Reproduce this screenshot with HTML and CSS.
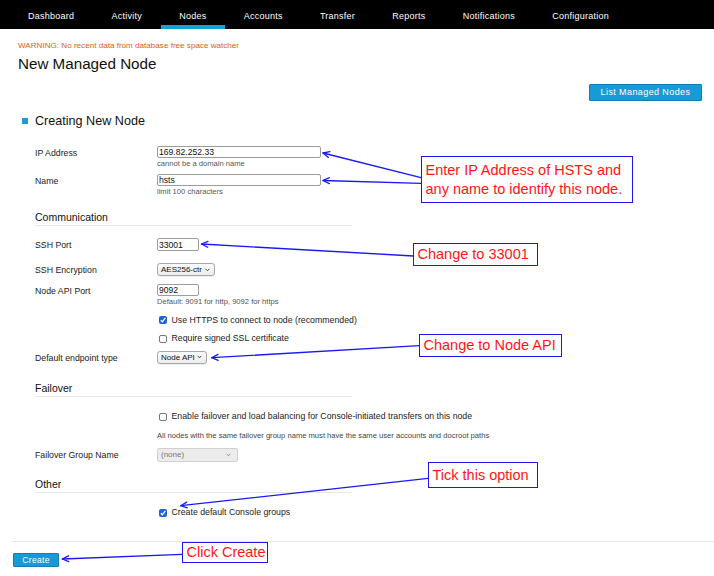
FILE: index.html
```
<!DOCTYPE html>
<html lang="en">
<head>
<meta charset="utf-8">
<title>New Managed Node</title>
<link rel="stylesheet" href="styles.css">
</head>
<body>
<nav class="topnav">
  <a class="tab">Dashboard</a>
  <a class="tab">Activity</a>
  <a class="tab active">Nodes</a>
  <a class="tab">Accounts</a>
  <a class="tab">Transfer</a>
  <a class="tab">Reports</a>
  <a class="tab">Notifications</a>
  <a class="tab">Configuration</a>
</nav>

<main class="page">
  <p class="warning">WARNING: No recent data from database free space watcher</p>
  <h1 class="title">New Managed Node</h1>
  <div class="actions"><button class="btn btn-list">List Managed Nodes</button></div>

  <h2 class="section-title"><span class="bullet"></span>Creating New Node</h2>

  <div class="form">
    <div class="row r-ip">
      <label class="lbl">IP Address</label>
      <div class="ctl">
        <input class="input w-wide" type="text" value="169.82.252.33">
        <div class="hint">cannot be a domain name</div>
      </div>
    </div>
    <div class="row r-name">
      <label class="lbl">Name</label>
      <div class="ctl">
        <input class="input w-wide" type="text" value="hsts">
        <div class="hint">limit 100 characters</div>
      </div>
    </div>

    <h3 class="group-title g-comm">Communication</h3>

    <div class="row r-ssh">
      <label class="lbl">SSH Port</label>
      <div class="ctl"><input class="input w-port tall" type="text" value="33001"></div>
    </div>
    <div class="row r-enc">
      <label class="lbl">SSH Encryption</label>
      <div class="ctl">
        <div class="select w-enc"><span>AES256-ctr</span><svg class="chev" width="5" height="4" viewBox="0 0 5 4"><path d="M0.6 0.8 L2.5 2.8 L4.4 0.8" fill="none" stroke="#333" stroke-width="0.9"/></svg></div>
      </div>
    </div>
    <div class="row r-api">
      <label class="lbl">Node API Port</label>
      <div class="ctl">
        <input class="input w-port" type="text" value="9092">
        <div class="hint">Default: 9091 for http, 9092 for https</div>
      </div>
    </div>
    <div class="row r-cb1">
      <span class="lbl"></span>
      <div class="ctl check">
        <span class="cb checked"><svg width="8" height="8" viewBox="0 0 8 8"><path d="M1.8 4.2 L3.4 5.8 L6.3 1.9" fill="none" stroke="#fff" stroke-width="1.3"/></svg></span>
        <span class="cb-text">Use HTTPS to connect to node (recommended)</span>
      </div>
    </div>
    <div class="row r-cb2">
      <span class="lbl"></span>
      <div class="ctl check">
        <span class="cb"></span>
        <span class="cb-text">Require signed SSL certificate</span>
      </div>
    </div>
    <div class="row r-ep">
      <label class="lbl">Default endpoint type</label>
      <div class="ctl">
        <div class="select w-ep"><span>Node API</span><svg class="chev" width="5" height="4" viewBox="0 0 5 4"><path d="M0.6 0.8 L2.5 2.8 L4.4 0.8" fill="none" stroke="#333" stroke-width="0.9"/></svg></div>
      </div>
    </div>

    <h3 class="group-title g-fail">Failover</h3>

    <div class="row r-cb3">
      <span class="lbl"></span>
      <div class="ctl check">
        <span class="cb"></span>
        <span class="cb-text">Enable failover and load balancing for Console-initiated transfers on this node</span>
      </div>
    </div>
    <div class="row r-note">
      <span class="lbl"></span>
      <div class="ctl note">All nodes with the same failover group name must have the same user accounts and docroot paths</div>
    </div>
    <div class="row r-fg">
      <label class="lbl">Failover Group Name</label>
      <div class="ctl">
        <div class="select disabled w-fg"><span>(none)</span><svg class="chev" width="5" height="4" viewBox="0 0 5 4"><path d="M0.6 0.8 L2.5 2.8 L4.4 0.8" fill="none" stroke="#888" stroke-width="0.9"/></svg></div>
      </div>
    </div>

    <h3 class="group-title g-other">Other</h3>

    <div class="row r-cb4">
      <span class="lbl"></span>
      <div class="ctl check">
        <span class="cb checked"><svg width="8" height="8" viewBox="0 0 8 8"><path d="M1.8 4.2 L3.4 5.8 L6.3 1.9" fill="none" stroke="#fff" stroke-width="1.3"/></svg></span>
        <span class="cb-text">Create default Console groups</span>
      </div>
    </div>
  </div>

  <div class="footer"><button class="btn btn-create">Create</button></div>
</main>

<div class="annotations">
  <svg class="arrows" width="714" height="576" viewBox="0 0 714 576">
    <g fill="none" stroke="#1a1af0" stroke-width="1.3" stroke-linecap="round" stroke-linejoin="round">
      <line x1="421" y1="177.7" x2="323" y2="153"/>
      <polyline points="328.4,157.4 323,153 329.9,151.7"/>
      <line x1="421" y1="183.3" x2="323" y2="180.5"/>
      <polyline points="329.3,183.6 323,180.5 329.4,177.7"/>
      <line x1="413.3" y1="256" x2="201.5" y2="244"/>
      <polyline points="207.7,247.3 201.5,244 208,241.4"/>
      <line x1="419.3" y1="345.7" x2="211.7" y2="357.7"/>
      <polyline points="218.2,360.3 211.7,357.7 217.9,354.4"/>
      <line x1="428" y1="478.3" x2="180.7" y2="505.7"/>
      <polyline points="187.3,507.9 180.7,505.7 186.7,502.1"/>
      <line x1="182" y1="554.3" x2="62.3" y2="559"/>
      <polyline points="68.7,561.7 62.3,559 68.5,555.8"/>
    </g>
  </svg>
  <div class="callout c1">Enter IP Address of HSTS and<br>any name to identify this node.</div>
  <div class="callout c2">Change to 33001</div>
  <div class="callout c3">Change to Node API</div>
  <div class="callout c4">Tick this option</div>
  <div class="callout c5">Click Create</div>
</div>
</body>
</html>
```

FILE: styles.css
```
* { box-sizing: border-box; }

html, body {
  margin: 0;
  padding: 0;
  background: #fff;
  font-family: "Liberation Sans", Arial, Helvetica, sans-serif;
  color: #222;
}

body {
  position: relative;
  width: 714px;
  height: 576px;
  overflow: hidden;
}

/* ---------- top navigation ---------- */
.topnav {
  display: flex;
  height: 29px;
  background: #000;
  padding-left: 9.5px;
}

.tab {
  display: block;
  height: 29px;
  padding: 10px 18.6px 0;
  font-size: 9px;
  line-height: 12px;
  letter-spacing: 0.25px;
  color: #fff;
  white-space: nowrap;
}

.tab.active {
  border-bottom: 4px solid #16a0db;
}

/* ---------- page ---------- */
.page {
  display: flex;
  flex-direction: column;
}

.warning {
  margin: 12px 0 0 18px;
  font-size: 8.1px;
  line-height: 10px;
  color: #e2600e;
}

.title {
  margin: 4px 0 0 18px;
  font-size: 15.2px;
  line-height: 18px;
  font-weight: normal;
  color: #111;
}

.actions {
  display: flex;
  justify-content: flex-end;
  padding-right: 12px;
  margin-top: 11px;
}

.btn {
  font-family: "Liberation Sans", Arial, sans-serif;
  color: #fff;
  background: #189ad6;
  border: 1px solid #127fb4;
  border-radius: 1px;
  padding: 0;
  cursor: pointer;
}

.btn-list {
  width: 113px;
  height: 17px;
  font-size: 9px;
  letter-spacing: 0.4px;
  line-height: 15px;
}

.section-title {
  display: flex;
  align-items: center;
  gap: 7px;
  margin: 12px 0 0 22px;
  font-size: 12.6px;
  line-height: 16px;
  font-weight: normal;
  color: #111;
}

.bullet {
  width: 6px;
  height: 6px;
  background: #1a9ad6;
}

/* ---------- form ---------- */
.form {
  margin-left: 35px;
  display: flex;
  flex-direction: column;
}

.row {
  display: grid;
  grid-template-columns: 122px auto;
  align-items: start;
}

.lbl {
  font-size: 8.75px;
  line-height: 12px;
  padding-top: 1px;
  color: #222;
}

.ctl {
  display: flex;
  flex-direction: column;
  align-items: flex-start;
}

.input {
  height: 12px;
  border: 1px solid #9c9c9c;
  border-radius: 2px;
  padding: 0 1px;
  margin: 0;
  font-family: "Liberation Sans", Arial, sans-serif;
  font-size: 8.6px;
  color: #111;
  background: #fff;
  outline: none;
}

.input.tall { height: 13px; }

.w-wide { width: 164px; }
.w-port { width: 42px; }
.w-enc { width: 58px; }
.w-ep { width: 50px; }
.w-fg { width: 81px; }

.hint {
  margin-top: 1px;
  font-size: 7.6px;
  line-height: 9px;
  color: #555;
}

.select {
  display: flex;
  align-items: center;
  justify-content: space-between;
  height: 13px;
  padding: 0 4px 0 3px;
  border: 1px solid #a8a8a8;
  border-radius: 3px;
  background: linear-gradient(#fbfbfb, #ececec);
  box-shadow: 0 0.5px 0.5px rgba(0,0,0,0.15);
  font-size: 8px;
  color: #111;
  white-space: nowrap;
}

.select.disabled {
  height: 14px;
  padding-right: 6px;
  border-color: #d0d0d0;
  border-radius: 2px;
  background: #ececec;
  box-shadow: none;
  color: #777;
}

.check {
  flex-direction: row;
  align-items: center;
  gap: 5px;
  padding-left: 1.5px;
  height: 11px;
}

.cb {
  display: flex;
  align-items: center;
  justify-content: center;
  width: 8px;
  height: 8px;
  border: 1px solid #777;
  border-radius: 2px;
  background: #fff;
}

.cb.checked {
  border: none;
  background: #1f63d8;
}

.cb-text {
  font-size: 8.75px;
  line-height: 11px;
  color: #222;
  white-space: nowrap;
}

.note {
  font-size: 7.6px;
  line-height: 9px;
  color: #444;
  white-space: nowrap;
}

.group-title {
  width: 317px;
  margin: 0;
  font-size: 10.5px;
  line-height: 13px;
  font-weight: normal;
  padding-bottom: 1px;
  border-bottom: 1px solid #e6e6e6;
  color: #111;
}

/* vertical rhythm */
.r-ip   { margin-top: 16.5px; }
.r-name { margin-top: 6px; }
.g-comm { margin-top: 15.5px; }
.r-ssh  { margin-top: 12px; }
.r-enc  { margin-top: 12px; }
.r-api  { margin-top: 8px; }
.r-cb1  { margin-top: 8.5px; }
.r-cb2  { margin-top: 7.7px; }
.r-ep   { margin-top: 6.8px; }
.g-fail { margin-top: 17.8px; }
.r-cb3  { margin-top: 14.7px; }
.r-note { margin-top: 9px; }
.r-fg   { margin-top: 7.2px; }
.g-other{ margin-top: 16.8px; }
.r-cb4  { margin-top: 13.7px; }

.footer {
  display: flex;
  margin: 22.8px 0 0 12px;
  padding: 11px 0 0 1px;
  border-top: 1px solid #e6e6e6;
}

.btn-create {
  width: 46px;
  height: 14px;
  font-size: 8.5px;
  letter-spacing: 0.3px;
  line-height: 12px;
}

/* ---------- annotations overlay ---------- */
.annotations {
  position: absolute;
  left: 0;
  top: 0;
  width: 714px;
  height: 576px;
  pointer-events: none;
}

.arrows {
  position: absolute;
  left: 0;
  top: 0;
}

.callout {
  position: absolute;
  display: flex;
  flex-direction: column;
  justify-content: center;
  padding: 0 0 0 3.5px;
  border: 1.5px solid #1a1af0;
  background: #fff;
  color: #ff1414;
  font-size: 14.5px;
  line-height: 19px;
  white-space: nowrap;
}

.c1 { left: 421px; top: 156px; width: 212px; height: 47px; }
.c2 { left: 413px; top: 243px; width: 125px; height: 22.5px; }
.c3 { left: 419px; top: 333.5px; width: 142.5px; height: 23px; }
.c4 { left: 428px; top: 462px; width: 110px; height: 26px; }
.c5 { left: 182px; top: 542px; width: 85.5px; height: 21px; }
```
